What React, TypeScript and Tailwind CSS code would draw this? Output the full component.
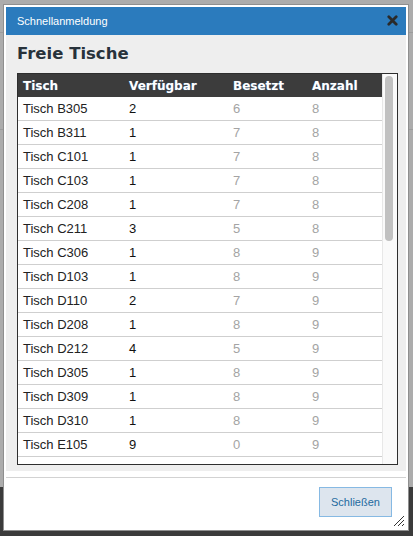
import React from "react";

type Row = { name: string; free: number; taken: number; total: number };

const rows: Row[] = [
  { name: "Tisch B305", free: 2, taken: 6, total: 8 },
  { name: "Tisch B311", free: 1, taken: 7, total: 8 },
  { name: "Tisch C101", free: 1, taken: 7, total: 8 },
  { name: "Tisch C103", free: 1, taken: 7, total: 8 },
  { name: "Tisch C208", free: 1, taken: 7, total: 8 },
  { name: "Tisch C211", free: 3, taken: 5, total: 8 },
  { name: "Tisch C306", free: 1, taken: 8, total: 9 },
  { name: "Tisch D103", free: 1, taken: 8, total: 9 },
  { name: "Tisch D110", free: 2, taken: 7, total: 9 },
  { name: "Tisch D208", free: 1, taken: 8, total: 9 },
  { name: "Tisch D212", free: 4, taken: 5, total: 9 },
  { name: "Tisch D305", free: 1, taken: 8, total: 9 },
  { name: "Tisch D309", free: 1, taken: 8, total: 9 },
  { name: "Tisch D310", free: 1, taken: 8, total: 9 },
  { name: "Tisch E105", free: 9, taken: 0, total: 9 },
  { name: "Tisch E106", free: 1, taken: 8, total: 9 },
];

export default function App() {
  return (
    <div className="relative w-[413px] h-[536px] overflow-hidden bg-[#acacac] flex flex-col font-['Liberation_Sans',Arial,sans-serif]">
      {/* page behind the modal */}
      <div className="h-[33px] border-b border-[#9c9c9c]" />
      <div className="h-[97px] border-b border-[#9c9c9c]" />
      <div className="flex-1" />
      <div className="h-[49px] bg-[#3b3b3b]" />

      {/* dialog */}
      <div className="absolute left-[3px] top-[4px] w-[406px] h-[527px] bg-white border border-[#8f8f8f] p-[2px] flex flex-col">
        <div className="h-[28px] shrink-0 bg-[#2b7bbd] flex items-center justify-between pl-[11px] pr-[8px]">
          <span className="text-[11px] text-white">Schnellanmeldung</span>
          <svg width="11" height="11" viewBox="0 0 11 11" className="mt-[-1px]">
            <path d="M1.8 1.8 L9.2 9.2 M9.2 1.8 L1.8 9.2" stroke="#2a2a2a" strokeWidth="2.8" strokeLinecap="round" />
          </svg>
        </div>

        <div className="bg-[#eeeeee] pl-[11px] pr-[8px] pb-[6px]">
          <h1 className="h-[38px] flex items-center font-['DejaVu_Sans',Verdana,sans-serif] font-bold text-[16.5px] text-[#28323b] pt-[1px]">
            Freie Tische
          </h1>
          <div className="h-[392px] border border-[#2e2e2e] bg-white flex">
            <div className="flex-1 overflow-hidden">
              <div className="grid grid-cols-[106px_104px_79px_1fr] h-[23px] items-center bg-[#3c3c3c] text-white font-['DejaVu_Sans',Verdana,sans-serif] font-bold text-[12px] [text-shadow:0_0_1px_#4a78a8]">
                <div className="pl-[5px]">Tisch</div>
                <div className="pl-[5px]">Verfügbar</div>
                <div className="pl-[5px]">Besetzt</div>
                <div className="pl-[5px]">Anzahl</div>
              </div>
              {rows.map((r) => (
                <div
                  key={r.name}
                  className="grid grid-cols-[106px_104px_79px_1fr] h-[24px] items-center border-b border-[#cfcfcf] text-[13px]"
                >
                  <div className="pl-[5px] text-[#222]">{r.name}</div>
                  <div className="pl-[5px] text-[#111]">{r.free}</div>
                  <div className="pl-[5px] text-[#a4a4a4]">{r.taken}</div>
                  <div className="pl-[5px] text-[#a4a4a4]">{r.total}</div>
                </div>
              ))}
            </div>
            {/* scrollbar */}
            <div className="w-[15px] shrink-0 bg-[#fafafa] border-l border-[#e8e8e8] pl-[2px] pr-[4px] pt-[2px]">
              <div className="h-[165px] rounded-full bg-[#c1c1c1]" />
            </div>
          </div>
        </div>

        <div className="relative flex-1 mt-[6px] border-t border-[#d2d2d2] flex justify-end items-start pt-[9px] pr-[14px]">
          <button className="w-[73px] h-[30px] bg-[#dde5ee] border border-[#86b9e3] text-[#236a9e] text-[11px]">
            Schließen
          </button>
          <svg width="12" height="12" viewBox="0 0 12 12" className="absolute right-[1px] bottom-[1px]">
            <path d="M1 11 L11 1 M5 11 L11 5 M9 11 L11 9" stroke="#333" strokeWidth="1" />
          </svg>
        </div>
      </div>
    </div>
  );
}
